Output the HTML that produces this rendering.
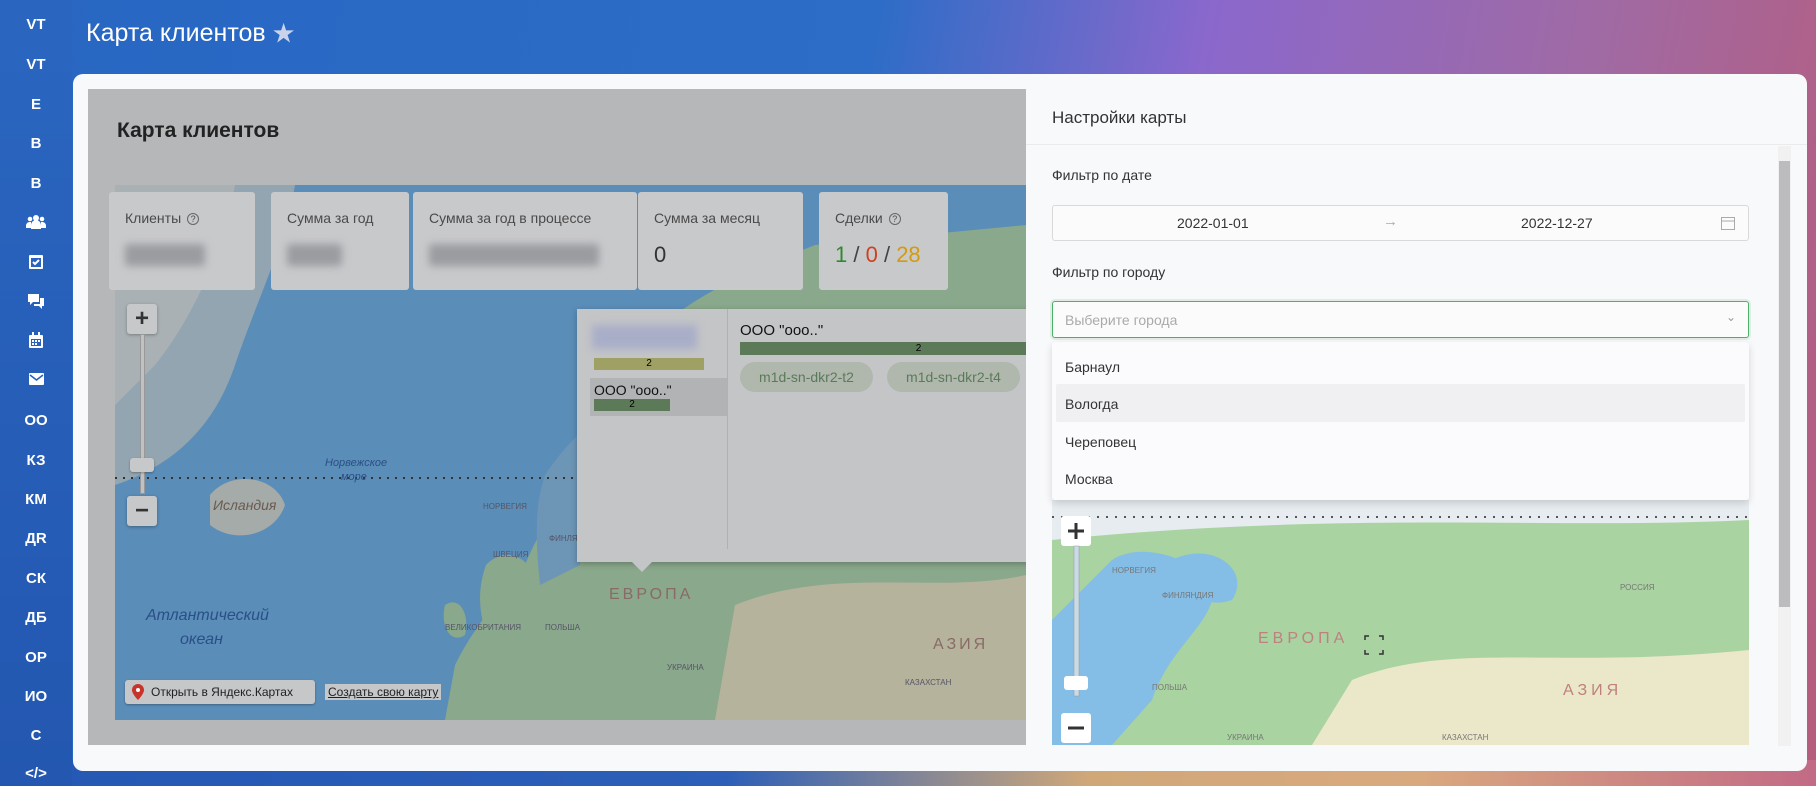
<!DOCTYPE html>
<html><head><meta charset="utf-8"><style>
*{box-sizing:border-box;margin:0;padding:0}
body{width:1816px;height:786px;overflow:hidden;position:relative;font-family:"Liberation Sans","Noto Sans CJK SC",sans-serif;
background:linear-gradient(100deg,#2766c2 0%,#2d6dc7 45%,#8a68cc 62%,#a06aa4 82%,#b75c7c 100%);}
.bottom{position:absolute;left:0;top:760px;width:1816px;height:26px;background:linear-gradient(90deg,#2458b4 0%,#2d5fb8 40%,#d0a878 60%,#d9a97e 78%,#c26a86 100%)}
.side{position:absolute;left:0;top:0;width:72px;height:786px;background:linear-gradient(180deg,#2a66c0,#2357b0)}
.si{position:absolute;left:0;width:72px;text-align:center;color:#fff;font-weight:bold;font-size:15px}
.hdr{position:absolute;left:86px;top:16px;color:#fff;font-size:25px}
.card{position:absolute;left:73px;top:74px;width:1734px;height:697px;background:#f8f9fb;border-radius:10px}
.lp{position:absolute;left:88px;top:89px;width:938px;height:656px;background:#b6b7b9;overflow:hidden}
.stat{position:absolute;top:103px;height:98px;background:#c8c9cb;border-radius:3px}
.stat .l{position:absolute;left:16px;top:18px;font-size:14px;color:#4a4a4a}
.blur{position:absolute;left:16px;top:52px;height:22px;background:#9a9ca0;filter:blur(4px);border-radius:3px}
.q{display:inline-block;width:12px;height:12px;border:1px solid #666;border-radius:50%;font-size:9px;text-align:center;line-height:10px;margin-left:6px;vertical-align:1px}
.zb{position:absolute;width:30px;height:30px;background:#c7c8ca;border-radius:3px;box-shadow:0 1px 3px rgba(0,0,0,.3);text-align:center;font-weight:bold;font-size:24px;line-height:29px;color:#333}
.rp{position:absolute;left:1026px;top:89px;width:781px;height:660px}
.lbl{position:absolute;left:1052px;font-size:14px;color:#333}
.inp{position:absolute;left:1052px;width:697px;height:36px;border:1px solid #d9d9d9;border-radius:3px;background:#fbfbfc}
.it{position:absolute;left:1052px;width:696px;height:38px;font-size:14px;color:#333;padding-left:13px;line-height:38px}
</style></head><body>
<div class="bottom"></div>
<div class="side">
<div class="si" style="top:16px">VT</div><div class="si" style="top:56px">VT</div><div class="si" style="top:96px">E</div><div class="si" style="top:135px">B</div><div class="si" style="top:175px">B</div>
<div class="si" style="top:214px">
<svg width="20" height="16" viewBox="0 0 20 16"><circle cx="10" cy="4" r="3" fill="#fff"/><circle cx="4" cy="5" r="2.3" fill="#fff"/><circle cx="16" cy="5" r="2.3" fill="#fff"/><path d="M5 15v-4a5 5 0 0110 0v4z M0 14v-3a4 4 0 014-3h1v6z M20 14v-3a4 4 0 00-4-3h-1v6z" fill="#fff"/></svg></div>
<div class="si" style="top:254px"><svg width="16" height="16"><rect x="1" y="1" width="14" height="14" rx="1" fill="#fff"/><rect x="3" y="4" width="10" height="9" fill="#2a62bd"/><path d="M5 8l2 2 4-4" stroke="#fff" stroke-width="2" fill="none"/></svg></div>
<div class="si" style="top:293px"><svg width="18" height="17"><path d="M1 1h11v8H6l-3 3V9H1z" fill="#fff"/><path d="M13 5h4v8h-2v3l-3-3H7v-2h6z" fill="#fff"/></svg></div>
<div class="si" style="top:332px"><svg width="16" height="17"><rect x="1" y="3" width="14" height="13" rx="1" fill="#fff"/><rect x="4" y="0" width="2" height="4" fill="#fff"/><rect x="10" y="0" width="2" height="4" fill="#fff"/><rect x="3" y="7" width="10" height="7" fill="#2a62bd"/><g fill="#fff"><rect x="4" y="8" width="2" height="2"/><rect x="7" y="8" width="2" height="2"/><rect x="10" y="8" width="2" height="2"/><rect x="4" y="11" width="2" height="2"/><rect x="7" y="11" width="2" height="2"/></g></svg></div>
<div class="si" style="top:372px"><svg width="15" height="12"><rect x="0" y="0" width="15" height="12" rx="1" fill="#fff"/><path d="M1 2l6.5 5L14 2" stroke="#2a62bd" stroke-width="1.6" fill="none"/></svg></div>
<div class="si" style="top:412px">OO</div><div class="si" style="top:452px">КЗ</div><div class="si" style="top:491px">КМ</div><div class="si" style="top:530px">ДR</div><div class="si" style="top:570px">СК</div><div class="si" style="top:609px">ДБ</div><div class="si" style="top:649px">ОР</div><div class="si" style="top:688px">ИО</div><div class="si" style="top:727px">С</div><div class="si" style="top:765px">&lt;/&gt;</div>
</div>
<div class="hdr">Карта клиентов <span style="color:#c9d3ea;font-size:22px">★</span></div>
<div class="card"></div>
<div class="lp">
 <div style="position:absolute;left:29px;top:30px;font-size:21px;font-weight:bold;color:#222">Карта клиентов</div>
 <svg style="position:absolute;left:27px;top:96px" width="911" height="535" viewBox="0 0 911 535">
  <rect width="911" height="535" fill="#5a8db8"/>
  <path d="M0 0 L180 0 C170 60 140 120 120 180 C100 240 60 280 0 300z" fill="#93a5b0"/>
  <path d="M0 0 L120 0 C110 60 80 130 40 180 L0 220z" fill="#a9b1b4"/>
  <path d="M95 310 C115 285 160 290 170 320 C160 350 120 360 95 340z" fill="#a4aba8"/>
  <path d="M560 130 C600 100 650 80 700 60 L911 40 L911 535 L330 535 L340 480 C360 440 380 420 410 380 C430 330 470 280 520 200z" fill="#8aa88c"/>
  <path d="M540 150 C580 120 620 130 600 180 C560 230 520 280 500 340 L470 330 C490 260 510 200 540 150z" fill="#a9b3ad"/>
  <path d="M430 290 C450 260 470 240 490 235 L500 260 C480 290 470 330 465 380 L425 400 C420 350 420 320 430 290z" fill="#6d95b5"/>
  <path d="M371 380 C390 360 420 370 425 410 C420 450 400 480 380 470 C365 440 360 410 371 380z" fill="#8aa88c"/>
  <path d="M330 420 C345 410 355 430 350 450 C335 460 325 440 330 420z" fill="#8aa88c"/>
  <path d="M620 420 C720 380 820 410 911 390 L911 535 L600 535z" fill="#b5b39c"/>
  <line x1="0" y1="293" x2="460" y2="293" stroke="#333" stroke-width="2" stroke-dasharray="2 6"/>
  <text x="31" y="435" font-size="16" fill="#2a4f86" font-style="italic" font-family="Liberation Sans">Атлантический</text>
  <text x="65" y="459" font-size="16" fill="#2a4f86" font-style="italic" font-family="Liberation Sans">океан</text>
  <text x="210" y="281" font-size="11" fill="#2a4f86" font-style="italic" font-family="Liberation Sans">Норвежское</text>
  <text x="226" y="295" font-size="11" fill="#2a4f86" font-style="italic" font-family="Liberation Sans">море</text>
  <text x="98" y="325" font-size="14" fill="#6a5a50" font-style="italic" font-family="Liberation Sans">Исландия</text>
  <text x="494" y="414" font-size="16" fill="#8a6a66" letter-spacing="3" font-family="Liberation Sans">ЕВРОПА</text>
  <text x="818" y="464" font-size="16" fill="#8a6a66" letter-spacing="3" font-family="Liberation Sans">АЗИЯ</text>
  <text x="368" y="324" font-size="8" fill="#556" font-family="Liberation Sans">НОРВЕГИЯ</text>
  <text x="378" y="372" font-size="8" fill="#556" font-family="Liberation Sans">ШВЕЦИЯ</text>
  <text x="434" y="356" font-size="8" fill="#556" font-family="Liberation Sans">ФИНЛЯНДИЯ</text>
  <text x="430" y="445" font-size="8" fill="#556" font-family="Liberation Sans">ПОЛЬША</text>
  <text x="330" y="445" font-size="8" fill="#556" font-family="Liberation Sans">ВЕЛИКОБРИТАНИЯ</text>
  <text x="552" y="485" font-size="8" fill="#556" font-family="Liberation Sans">УКРАИНА</text>
  <text x="790" y="500" font-size="8" fill="#556" font-family="Liberation Sans">КАЗАХСТАН</text>
 </svg>
 <div class="stat" style="left:21px;width:146px"><div class="l">Клиенты<span class="q">?</span></div><div class="blur" style="width:80px"></div></div>
 <div class="stat" style="left:183px;width:138px"><div class="l">Сумма за год</div><div class="blur" style="width:55px"></div></div>
 <div class="stat" style="left:325px;width:224px"><div class="l">Сумма за год в процессе</div><div class="blur" style="width:170px"></div></div>
 <div class="stat" style="left:550px;width:165px"><div class="l">Сумма за месяц</div><div style="position:absolute;left:16px;top:50px;font-size:22px;color:#333">0</div></div>
 <div class="stat" style="left:731px;width:129px"><div class="l">Сделки<span class="q">?</span></div><div style="position:absolute;left:16px;top:50px;font-size:22px;color:#444"><span style="color:#2f8a2f">1</span> / <span style="color:#d04020">0</span> / <span style="color:#d49a10">28</span></div></div>
 <div class="zb" style="left:39px;top:215px">+</div>
 <div style="position:absolute;left:52px;top:245px;width:5px;height:160px;background:#c0c1c3;border:1px solid #999"></div>
 <div style="position:absolute;left:42px;top:369px;width:24px;height:14px;background:#c7c8ca;border-radius:3px;box-shadow:0 1px 2px rgba(0,0,0,.3)"></div>
 <div class="zb" style="left:39px;top:407px">−</div>
 <div style="position:absolute;left:489px;top:220px;width:460px;height:253px;background:#c4c5c7;box-shadow:0 2px 6px rgba(0,0,0,.25)">
  <div style="position:absolute;left:150px;top:0;width:1px;height:240px;background:#b0b1b3"></div>
  <div style="position:absolute;left:15px;top:16px;width:105px;height:24px;background:#a9aec8;filter:blur(4px)"></div>
  <div style="position:absolute;left:17px;top:49px;width:110px;height:12px;background:#9fa064;font-size:10px;text-align:center;line-height:12px">2</div>
  <div style="position:absolute;left:13px;top:69px;width:137px;height:38px;background:#b2b3b5"></div>
  <div style="position:absolute;left:17px;top:73px;font-size:14px;color:#111">ООО "ооо.."</div>
  <div style="position:absolute;left:17px;top:90px;width:76px;height:12px;background:#5d7a58;font-size:10px;text-align:center;line-height:12px">2</div>
  <div style="position:absolute;left:163px;top:13px;font-size:15px;color:#111">ООО "ооо.."</div>
  <div style="position:absolute;left:163px;top:33px;width:297px;height:13px;background:#5d7a58;font-size:10px;text-align:center;line-height:13px;padding-left:60px">2</div>
  <div style="position:absolute;left:163px;top:53px;width:133px;height:30px;border-radius:15px;background:#b0b8ae;color:#5a7a5a;font-size:14px;text-align:center;line-height:30px">m1d-sn-dkr2-t2</div>
  <div style="position:absolute;left:310px;top:53px;width:133px;height:30px;border-radius:15px;background:#b0b8ae;color:#5a7a5a;font-size:14px;text-align:center;line-height:30px">m1d-sn-dkr2-t4</div>
  <div style="position:absolute;left:55px;top:253px;width:0;height:0;border-left:10px solid transparent;border-right:10px solid transparent;border-top:10px solid #c4c5c7"></div>
 </div>
 <div style="position:absolute;left:37px;top:591px;width:190px;height:24px;background:#c6c7c9;border-radius:3px;box-shadow:0 1px 2px rgba(0,0,0,.3);font-size:12px;line-height:24px;padding-left:26px;color:#222">Открыть в Яндекс.Картах
  <svg style="position:absolute;left:7px;top:4px" width="12" height="16"><path d="M6 0a6 6 0 016 6c0 4-6 10-6 10S0 10 0 6a6 6 0 016-6z" fill="#c8342a"/><circle cx="6" cy="6" r="2" fill="#fff"/></svg></div>
 <div style="position:absolute;left:237px;top:595px;padding:1px 3px;background:#c6c7c9;font-size:12px;color:#222;text-decoration:underline">Создать свою карту</div>
</div>
<div class="rp">
 <div style="position:absolute;left:26px;top:19px;font-size:17px;color:#333">Настройки карты</div>
 <div style="position:absolute;left:0;top:55px;width:781px;height:1px;background:#ebebee"></div>
 <div style="position:absolute;left:752px;top:57px;width:13px;height:600px;background:#f1f1f1"></div>
 <div style="position:absolute;left:753px;top:72px;width:11px;height:446px;background:#bcbcbe"></div>
</div>
<div class="lbl" style="top:167px">Фильтр по дате</div>
<div class="inp" style="top:205px">
 <div style="position:absolute;left:124px;top:9px;font-size:14px;color:#333">2022-01-01</div>
 <div style="position:absolute;left:330px;top:7px;font-size:15px;color:#aaa">→</div>
 <div style="position:absolute;left:468px;top:9px;font-size:14px;color:#333">2022-12-27</div>
 <svg style="position:absolute;left:668px;top:10px" width="14" height="14"><rect x=".5" y="1.5" width="13" height="12" fill="none" stroke="#aaa"/><line x1="1" y1="5" x2="13" y2="5" stroke="#aaa"/></svg>
</div>
<div class="lbl" style="top:264px">Фильтр по городу</div>
<svg style="position:absolute;left:1052px;top:500px" width="697" height="245" viewBox="0 0 697 245">
 <rect width="697" height="245" fill="#a9d3a0"/>
 <path d="M0 0 L697 0 L697 20 C500 30 300 10 0 40z" fill="#e6ecef"/>
 <path d="M60 60 C90 40 140 60 160 80 C170 120 120 140 100 200 L60 245 L0 245 L0 120z" fill="#84bde6"/>
 <path d="M120 60 C160 40 200 70 180 100 C150 110 130 90 120 60z" fill="#84bde6"/>
 <path d="M300 180 C400 140 500 170 697 150 L697 245 L260 245z" fill="#ebe7c9"/>
 <line x1="0" y1="17" x2="697" y2="17" stroke="#555" stroke-width="2" stroke-dasharray="2 7"/>
 <text x="206" y="143" font-size="16" fill="#c08080" letter-spacing="4" font-family="Liberation Sans">ЕВРОПА</text>
 <text x="511" y="195" font-size="16" fill="#c08080" letter-spacing="4" font-family="Liberation Sans">АЗИЯ</text>
 <text x="568" y="90" font-size="8" fill="#777" font-family="Liberation Sans">РОССИЯ</text>
 <text x="60" y="73" font-size="8" fill="#777" font-family="Liberation Sans">НОРВЕГИЯ</text>
 <text x="110" y="98" font-size="8" fill="#777" font-family="Liberation Sans">ФИНЛЯНДИЯ</text>
 <text x="175" y="240" font-size="8" fill="#777" font-family="Liberation Sans">УКРАИНА</text>
 <text x="100" y="190" font-size="8" fill="#777" font-family="Liberation Sans">ПОЛЬША</text>
 <text x="390" y="240" font-size="8" fill="#777" font-family="Liberation Sans">КАЗАХСТАН</text>
 <rect x="9" y="16" width="30" height="30" rx="3" fill="#fff"/><path d="M24 23v16M16 31h16" stroke="#333" stroke-width="3"/>
 <rect x="22" y="46" width="5" height="150" fill="#c9dbe6" stroke="#999" stroke-width=".5"/>
 <rect x="12" y="176" width="24" height="14" rx="3" fill="#fff"/>
 <rect x="9" y="213" width="30" height="30" rx="3" fill="#fff"/><path d="M16 228h16" stroke="#333" stroke-width="3"/>
 <path d="M313 140v-4h4M327 136h4v4M331 150v4h-4M317 154h-4v-4" stroke="#333" stroke-width="1.5" fill="none"/>
</svg>
<div style="position:absolute;left:1052px;top:301px;width:697px;height:37px;border:1px solid #4caf6a;border-radius:3px;background:#fbfbfc;box-shadow:0 0 0 2px rgba(76,175,106,.15)">
 <div style="position:absolute;left:12px;top:10px;font-size:14px;color:#aaa">Выберите города</div>
 <div style="position:absolute;right:12px;top:8px;font-size:12px;color:#999">⌄</div>
</div>
<div style="position:absolute;left:1052px;top:342px;width:697px;height:158px;background:#fbfbfd;box-shadow:0 3px 8px rgba(0,0,0,.15);border-radius:3px"></div>
<div style="position:absolute;left:1056px;top:384px;width:689px;height:38px;background:#f0f0f3;border-radius:2px"></div>
<div class="it" style="top:348px">Барнаул</div>
<div class="it" style="top:385px">Вологда</div>
<div class="it" style="top:423px">Череповец</div>
<div class="it" style="top:460px">Москва</div>
</body></html>
